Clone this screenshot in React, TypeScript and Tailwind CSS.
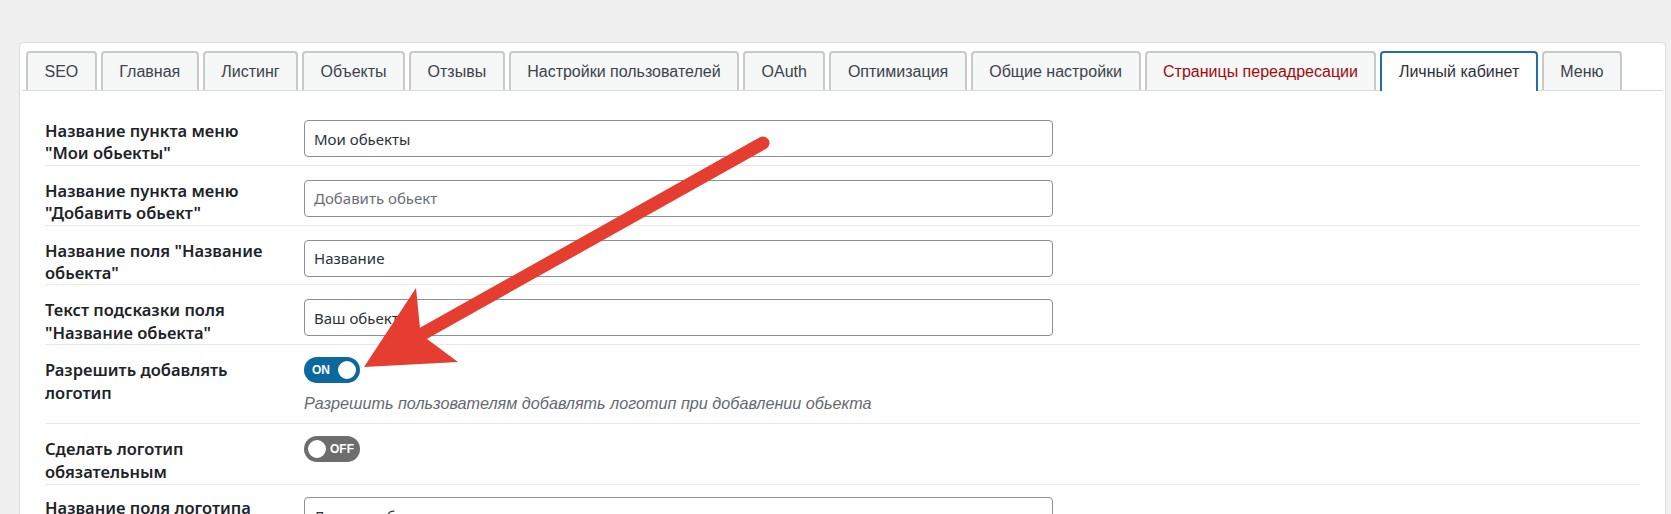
import React, { useState } from 'react';

const tabs = [
  'SEO',
  'Главная',
  'Листинг',
  'Объекты',
  'Отзывы',
  'Настройки пользователей',
  'OAuth',
  'Оптимизация',
  'Общие настройки',
  'Страницы переадресации',
  'Личный кабинет',
  'Меню',
];

const uiFont = { fontFamily: '"Noto Sans", "Open Sans", sans-serif' };

const Toggle: React.FC<{ on: boolean; onChange: () => void }> = ({ on, onChange }) => (
  <button
    type="button"
    onClick={onChange}
    className={
      on
        ? 'relative flex h-[26px] w-[56px] items-center rounded-full bg-[#0b69a0] pl-[8px]'
        : 'relative flex h-[26px] w-[56px] items-center justify-end rounded-full bg-[#6d6d6d] pr-[6px]'
    }
  >
    <span className="font-['Liberation_Sans',Arial,sans-serif] text-[12px] font-bold text-white">
      {on ? 'ON' : 'OFF'}
    </span>
    <span
      className={
        on
          ? 'absolute right-[2px] top-[2px] h-[22px] w-[22px] rounded-full border-2 border-[#0b69a0] bg-white'
          : 'absolute left-[2px] top-[2px] h-[22px] w-[22px] rounded-full border-2 border-[#6d6d6d] bg-white'
      }
    />
  </button>
);

const Row: React.FC<{ label: string; children: React.ReactNode; last?: boolean }> = ({ label, children, last }) => (
  <div className={last ? 'flex pt-[12px]' : 'flex border-b border-[#e8e8e8] pt-[14px]'}>
    <div className="w-[259px] shrink-0 pr-[30px] text-[16.5px] font-semibold leading-[22.4px] text-[#1d2327]" style={uiFont}>
      {label}
    </div>
    <div className="flex-1">{children}</div>
  </div>
);

const TextInput: React.FC<{ value?: string; placeholder?: string }> = ({ value, placeholder }) => (
  <input
    type="text"
    defaultValue={value}
    placeholder={placeholder}
    style={uiFont}
    className="h-[37px] w-[749px] rounded-[4px] border border-[#8c8f94] bg-white px-[9px] text-[15px] text-[#2c3338] placeholder:text-[#6b6f75] focus:outline-none"
  />
);

export default function App() {
  const [allowLogo, setAllowLogo] = useState(true);
  const [requireLogo, setRequireLogo] = useState(false);

  return (
    <div className="relative min-h-screen overflow-hidden bg-[#f0f0f1] pl-[19px] pr-[5px] pt-[42px]">
      <div className="rounded-[4px] border border-[#dcdcde] bg-white pb-[40px]">
        {/* tab strip */}
        <div className="mx-[2px] mt-[8px] flex gap-[4px] border-b border-[#dcdcde] pl-[4px]">
          {tabs.map((t) => {
            const active = t === 'Личный кабинет';
            const warn = t === 'Страницы переадресации';
            return (
              <div
                key={t}
                className={
                  active
                    ? '-mb-px flex h-[40px] items-center rounded-t-[4px] border-2 border-b-0 border-[#1f6fa8] bg-white px-[16.5px]'
                    : 'flex h-[39px] items-center rounded-t-[4px] border-2 border-b-0 border-[#c9c9c9] bg-[#f6f7f7] px-[16.5px]'
                }
              >
                <span
                  className={
                    'font-[\'Liberation_Sans\',Arial,sans-serif] text-[16px] ' +
                    (warn ? 'text-[#a00a0a]' : active ? 'text-[#2c3338]' : 'text-[#3c434a]')
                  }
                >
                  {t}
                </span>
              </div>
            );
          })}
        </div>

        {/* settings form */}
        <div className="px-[25px] pt-[15px]">
          <Row label={'Название пункта меню "Мои обьекты"'}>
            <TextInput value="Мои обьекты" />
          </Row>
          <Row label={'Название пункта меню "Добавить обьект"'}>
            <TextInput placeholder="Добавить обьект" />
          </Row>
          <Row label={'Название поля "Название обьекта"'}>
            <TextInput value="Название" />
          </Row>
          <Row label={'Текст подсказки поля "Название обьекта"'}>
            <TextInput value="Ваш обьект" />
          </Row>
          <Row label="Разрешить добавлять логотип">
            <div className="-mt-[2px] pb-[9px]">
              <Toggle on={allowLogo} onChange={() => setAllowLogo(!allowLogo)} />
              <p className="mt-[9px] font-['Liberation_Sans',Arial,sans-serif] text-[16.2px] italic leading-[22px] text-[#646970]">
                Разрешить пользователям добавлять логотип при добавлении обьекта
              </p>
            </div>
          </Row>
          <Row label="Сделать логотип обязательным">
            <div className="-mt-[2px] pb-[22px]">
              <Toggle on={requireLogo} onChange={() => setRequireLogo(!requireLogo)} />
            </div>
          </Row>
          <Row label="Название поля логотипа" last>
            <TextInput value="Логотип обьекта" />
          </Row>
        </div>
      </div>

      {/* red pointer drawn over the form */}
      <svg className="pointer-events-none absolute left-0 top-0" width="1671" height="514" viewBox="0 0 1671 514">
        <line x1="763" y1="143" x2="424" y2="333" stroke="#e53d30" strokeWidth="13" strokeLinecap="round" />
        <polygon points="364,367 416,288 420,328 427,339 458,362" fill="#e53d30" />
      </svg>
    </div>
  );
}
